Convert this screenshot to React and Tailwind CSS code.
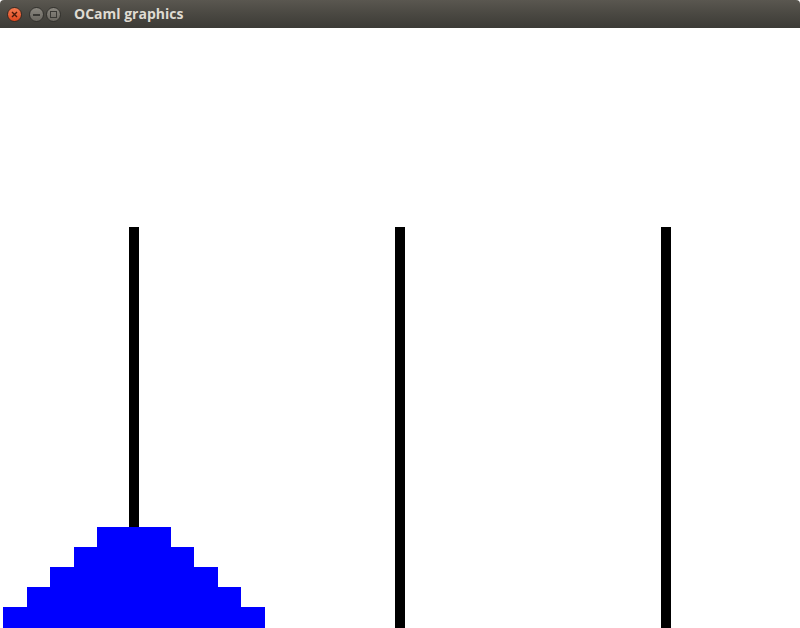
export default function App() {
  const disks = [
    { x: 97, w: 74, y: 499, h: 20 },
    { x: 74, w: 120, y: 519, h: 20 },
    { x: 50, w: 168, y: 539, h: 20 },
    { x: 27, w: 214, y: 559, h: 20 },
    { x: 3, w: 262, y: 579, h: 21 },
  ];
  return (
    <div className="w-[800px] h-[628px] flex flex-col bg-white overflow-hidden">
      <div className="h-[28px] flex items-center rounded-tr-[4px] rounded-tl-[4px] bg-gradient-to-b from-[#5a5750] via-[#4a4842] to-[#3c3b36] shrink-0">
        <div className="flex items-center pl-[7px] mt-[1px]">
          <div className="w-[15px] h-[15px] rounded-full bg-gradient-to-b from-[#f37a4f] to-[#e0461c] border border-[#3a2a22] flex items-center justify-center">
            <svg width="7" height="7" viewBox="0 0 7 7">
              <path d="M1 1L6 6M6 1L1 6" stroke="#4a1a0a" strokeWidth="1.4" />
            </svg>
          </div>
          <div className="ml-[7px] w-[15px] h-[15px] rounded-full bg-gradient-to-b from-[#8a877f] to-[#6a6760] border border-[#33322e] flex items-center justify-center">
            <div className="w-[7px] h-[2px] bg-[#3a3935]" />
          </div>
          <div className="ml-[2px] w-[15px] h-[15px] rounded-full bg-gradient-to-b from-[#8a877f] to-[#6a6760] border border-[#33322e] flex items-center justify-center">
            <div className="w-[7px] h-[7px] border-[1.5px] border-[#3a3935]" />
          </div>
        </div>
        <span className="ml-[13px] text-[14px] font-bold text-[#dfdbd2] font-['Open_Sans',sans-serif] leading-none">
          OCaml graphics
        </span>
      </div>
      <svg width="800" height="600" viewBox="0 0 800 600" className="block">
        <rect x="0" y="0" width="800" height="600" fill="#ffffff" />
        <rect x="129" y="199" width="10" height="401" fill="#000000" />
        <rect x="395" y="199" width="10" height="401" fill="#000000" />
        <rect x="661" y="199" width="10" height="401" fill="#000000" />
        {disks.map((d, i) => (
          <rect key={i} x={d.x} y={d.y} width={d.w} height={d.h} fill="#0000ff" />
        ))}
      </svg>
    </div>
  );
}
